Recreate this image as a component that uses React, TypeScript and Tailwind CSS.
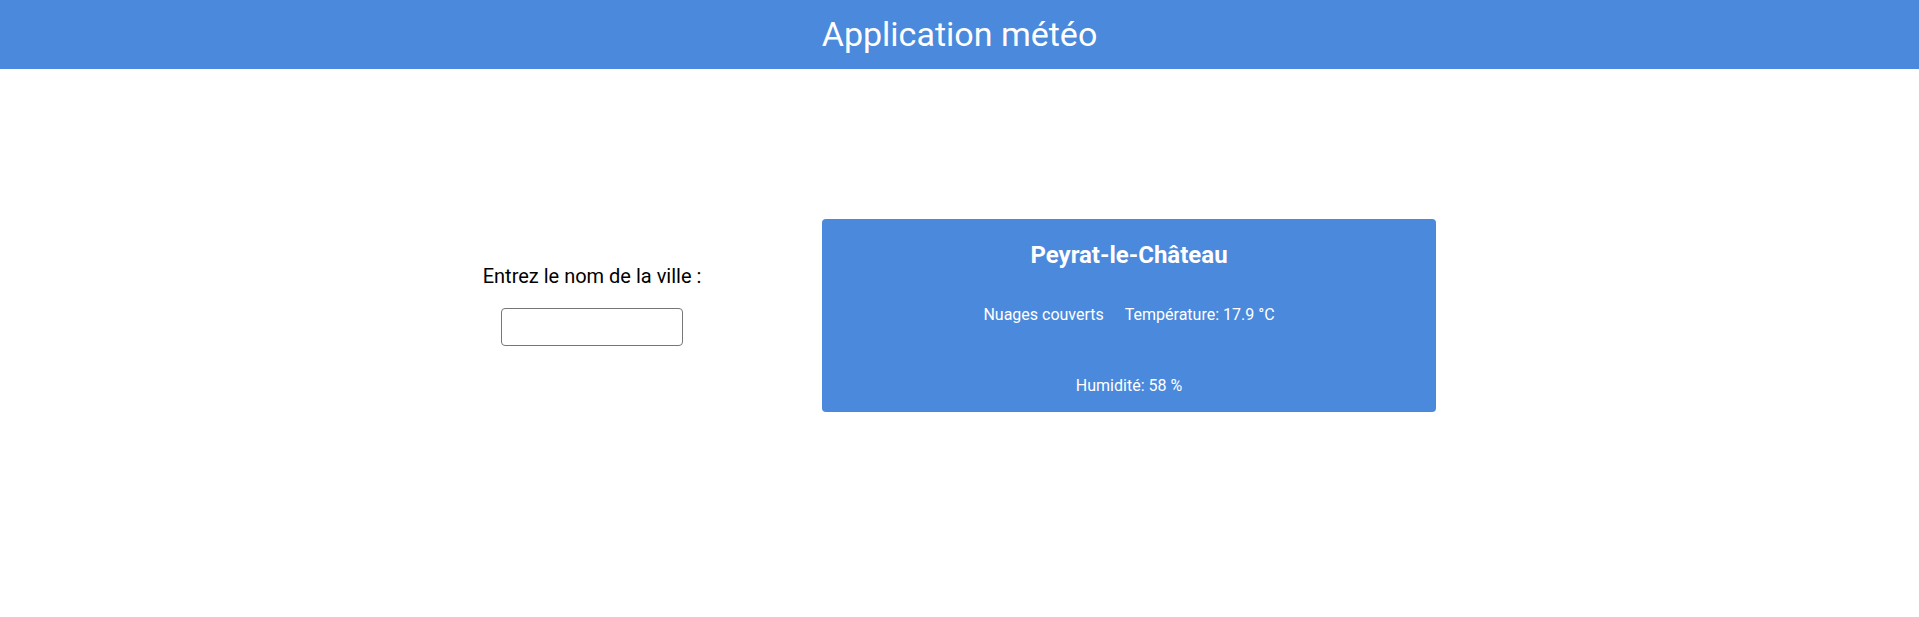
import React, { useState } from "react";

const App = () => {
  const [city, setCity] = useState("");

  return (
    <div className="min-h-[617px] bg-white font-['Roboto',sans-serif]">
      <header className="h-[69px] bg-[#4a89dc] flex items-center justify-center">
        <h1 className="text-[34px] leading-none text-white font-normal -mt-[1px]">Application météo</h1>
      </header>

      <main className="flex justify-center items-start gap-[121px] pt-[150px]">
        <div className="flex flex-col items-center mt-[46px] w-[218px]">
          <label htmlFor="city" className="text-[20px] leading-[23px] text-black whitespace-nowrap">
            Entrez le nom de la ville :
          </label>
          <input
            id="city"
            type="text"
            value={city}
            onChange={(e) => setCity(e.target.value)}
            className="mt-[20px] w-[182px] h-[38px] border border-[#767676] rounded-[4px] px-2 text-[16px] outline-none"
          />
        </div>

        <div className="w-[614px] h-[193px] bg-[#4a89dc] rounded-[4px] text-white text-center pt-[22px]">
          <h2 className="text-[24px] font-bold leading-[28px]">Peyrat-le-Château</h2>
          <p className="mt-[36px] text-[16px] leading-[19px] flex justify-center gap-[21px]">
            <span>Nuages couverts</span>
            <span>Température: 17.9 °C</span>
          </p>
          <p className="mt-[52px] text-[16px] leading-[19px]">Humidité: 58 %</p>
        </div>
      </main>
    </div>
  );
};

export default App;
